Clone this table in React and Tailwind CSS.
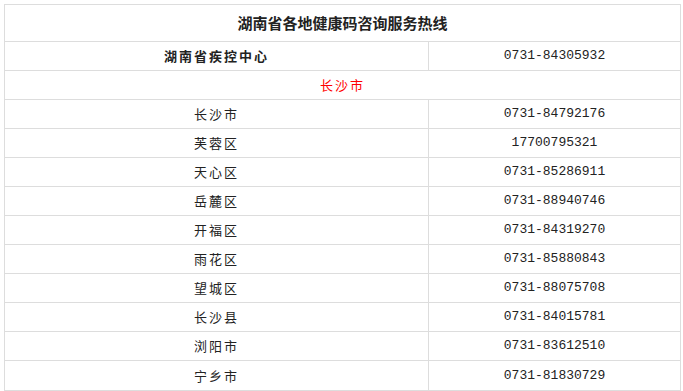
import React from 'react';

const rows = [
  ['长沙市', '0731-84792176'],
  ['芙蓉区', '17700795321'],
  ['天心区', '0731-85286911'],
  ['岳麓区', '0731-88940746'],
  ['开福区', '0731-84319270'],
  ['雨花区', '0731-85880843'],
  ['望城区', '0731-88075708'],
  ['长沙县', '0731-84015781'],
  ['浏阳市', '0731-83612510'],
  ['宁乡市', '0731-81830729'],
];

const cjk = "font-['SimSun','Noto_Sans_CJK_SC',sans-serif]";
const mono = "font-['Liberation_Mono','Noto_Sans_CJK_SC',monospace]";

const Row = ({ name, phone, bold }) => (
  <div className="flex h-[29px] border-b border-[#dddddd] last:border-b-0">
    <div className={`w-[424px] border-r border-[#dddddd] flex items-center justify-center ${cjk} text-[13px] tracking-[2px] text-[#222] ${bold ? 'font-bold' : ''}`}>
      {name}
    </div>
    <div className={`flex-1 flex items-center justify-center ${mono} text-[13px] text-[#222]`}>
      {phone}
    </div>
  </div>
);

export default function App() {
  return (
    <div className="w-[683px] h-[391px] bg-white pt-[4px] pl-[4px]">
      <div className="w-[677px] border border-[#dddddd]">
        <div className={`h-[37px] border-b border-[#dddddd] flex items-center justify-center ${cjk} text-[15px] font-bold text-[#222]`}>
          湖南省各地健康码咨询服务热线
        </div>
        <Row name="湖南省疾控中心" phone="0731-84305932" bold />
        <div className={`h-[29px] border-b border-[#dddddd] flex items-center justify-center ${cjk} text-[13px] tracking-[2px] text-[#ff0000]`}>
          长沙市
        </div>
        {rows.map(([name, phone]) => (
          <Row key={name} name={name} phone={phone} />
        ))}
      </div>
    </div>
  );
}
